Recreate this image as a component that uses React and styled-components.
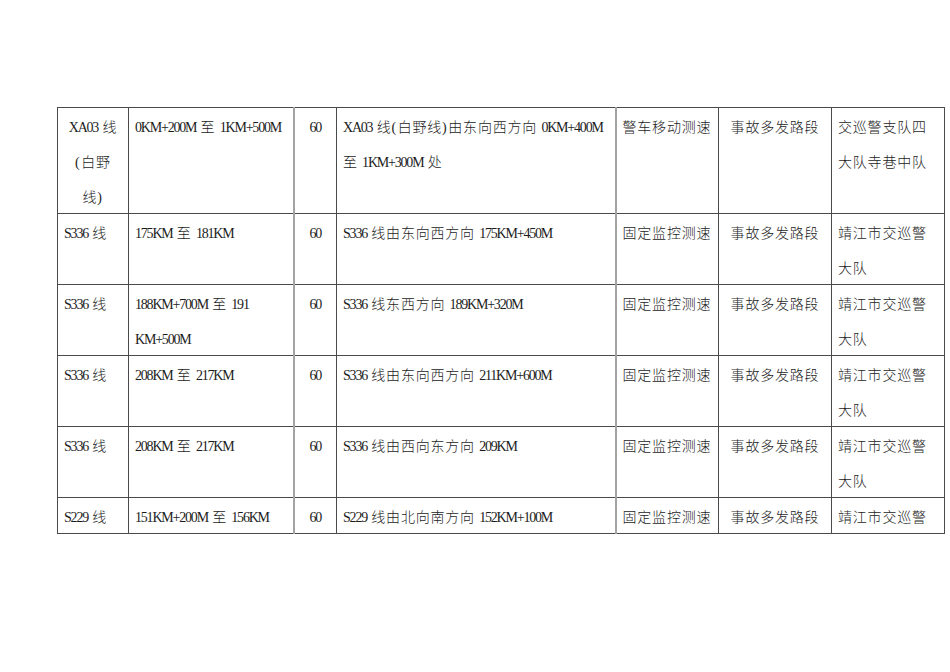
import React from "react";
import styled, { createGlobalStyle } from "styled-components";

const Global = createGlobalStyle`
  html, body { margin: 0; padding: 0; background: #ffffff; }
  body { font-family: "Liberation Serif", "Noto Sans CJK SC", serif; }
`;

const Page = styled.div`
  width: 950px;
  height: 672px;
  padding: 107px 0 0 57px;
  box-sizing: border-box;
  overflow: hidden;
  background: #fff;
`;

const Table = styled.table`
  border-collapse: collapse;
  table-layout: fixed;
  width: 887px;
  color: #1c1c1c;
`;

const Cell = styled.td`
  border: 1px solid #4a4a4a;
  ${(p) => (p.$soft ? "border-left: 2px solid #a3a3a3;" : "")}
  padding: 0 4px 0 ${(p) => (p.$align === "center" ? "4px" : "6px")};
  vertical-align: top;
  text-align: ${(p) => p.$align || "left"};
  font-family: "Liberation Serif", "Noto Sans CJK SC", serif;
  font-size: 14px;
  font-weight: 300;
  line-height: 35px;
  letter-spacing: 0.8px;
  white-space: nowrap;
  overflow: hidden;
`;

const Lines = styled.div`
  margin: 2px 0 -2px;
`;

const Latin = styled.span`
  font-family: "Liberation Serif", serif;
  font-weight: 400;
  letter-spacing: -1.2px;
  font-size: 14px;
`;

const Paren = styled.span`
  font-family: "Liberation Serif", serif;
  font-weight: 400;
  letter-spacing: 1.5px;
`;

const L = ({ children }) => <Latin>{children}</Latin>;

const cols = [71, 165, 43, 279, 103, 113, 113];

const unitJJ = (
  <>
    靖江市交巡警
    <br />
    大队
  </>
);

const rows = [
  {
    road: (
      <>
        <L>XA03</L> 线<br />
        <Paren>(</Paren>白野
        <br />
        线<Paren>)</Paren>
      </>
    ),
    roadAlign: "center",
    range: (
      <>
        <L>0KM+200M</L> 至 <L>1KM+500M</L>
      </>
    ),
    place: (
      <>
        <L>XA03</L> 线<Paren>(</Paren>白野线<Paren>)</Paren>由东向西方向 <L>0KM+400M</L>
        <br />至 <L>1KM+300M</L> 处
      </>
    ),
    mode: "警车移动测速",
    unit: (
      <>
        交巡警支队四
        <br />
        大队寺巷中队
      </>
    ),
  },
  {
    road: <><L>S336</L> 线</>,
    range: <><L>175KM</L> 至 <L>181KM</L></>,
    place: <><L>S336</L> 线由东向西方向 <L>175KM+450M</L></>,
    mode: "固定监控测速",
    unit: unitJJ,
  },
  {
    road: <><L>S336</L> 线</>,
    range: (
      <>
        <L>188KM+700M</L> 至 <L>191</L>
        <br />
        <L>KM+500M</L>
      </>
    ),
    place: <><L>S336</L> 线东西方向 <L>189KM+320M</L></>,
    mode: "固定监控测速",
    unit: unitJJ,
  },
  {
    road: <><L>S336</L> 线</>,
    range: <><L>208KM</L> 至 <L>217KM</L></>,
    place: <><L>S336</L> 线由东向西方向 <L>211KM+600M</L></>,
    mode: "固定监控测速",
    unit: unitJJ,
  },
  {
    road: <><L>S336</L> 线</>,
    range: <><L>208KM</L> 至 <L>217KM</L></>,
    place: <><L>S336</L> 线由西向东方向 <L>209KM</L></>,
    mode: "固定监控测速",
    unit: unitJJ,
  },
  {
    road: <><L>S229</L> 线</>,
    range: <><L>151KM+200M</L> 至 <L>156KM</L></>,
    place: <><L>S229</L> 线由北向南方向 <L>152KM+100M</L></>,
    mode: "固定监控测速",
    unit: <>靖江市交巡警</>,
  },
];

export default function App() {
  return (
    <Page>
      <Global />
      <Table>
        <colgroup>
          {cols.map((w, i) => (
            <col key={i} style={{ width: w }} />
          ))}
        </colgroup>
        <tbody>
          {rows.map((r, i) => (
            <tr key={i}>
              <Cell $align={r.roadAlign}><Lines>{r.road}</Lines></Cell>
              <Cell><Lines>{r.range}</Lines></Cell>
              <Cell $align="center" $soft>
                <Lines><L>60</L></Lines>
              </Cell>
              <Cell><Lines>{r.place}</Lines></Cell>
              <Cell $soft><Lines>{r.mode}</Lines></Cell>
              <Cell $align="center"><Lines>事故多发路段</Lines></Cell>
              <Cell><Lines>{r.unit}</Lines></Cell>
            </tr>
          ))}
        </tbody>
      </Table>
    </Page>
  );
}
